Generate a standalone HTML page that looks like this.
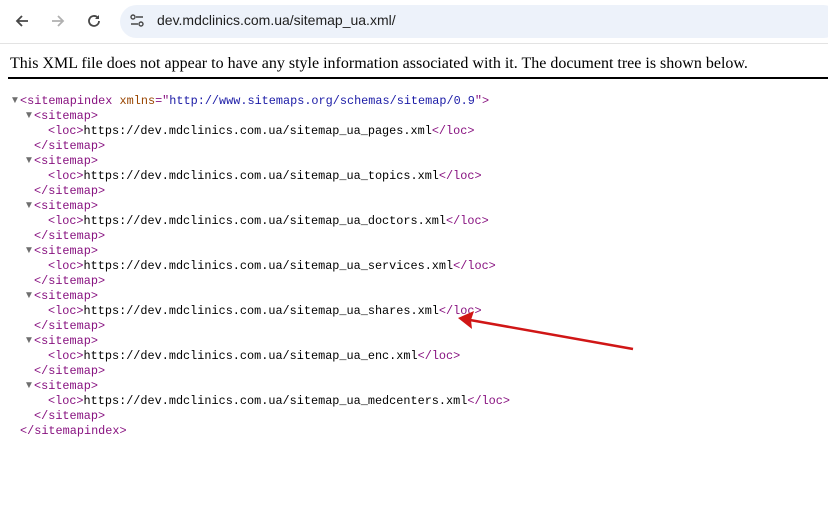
<!DOCTYPE html>
<html><head><meta charset="utf-8"><style>
body{margin:0;width:828px;height:513px;background:#fff;overflow:hidden;position:relative;font-family:"Liberation Sans",sans-serif}
.bar{position:absolute;left:0;top:0;width:828px;height:43px;background:#fff;border-bottom:1px solid #e3e3e3}
.pill{position:absolute;left:120px;top:5px;width:720px;height:33px;border-radius:17px;background:#edf2fa}
.url{position:absolute;left:157px;top:12px;font-size:14px;color:#1f1f1f}
.msg{position:absolute;left:10px;top:55px;font-family:"Liberation Serif",serif;font-size:16px;color:#000;white-space:nowrap}
.rule{position:absolute;left:8px;top:77px;width:820px;height:2px;background:#000}
.x{position:absolute;font-family:"Liberation Mono",monospace;font-size:11.85px;white-space:pre;line-height:15px;color:#000}
.t{color:#881280}.a{color:#994500}.v{color:#1a1aa6}
.tri{position:absolute;font-size:10px;color:#6e6e6e}
</style></head><body>
<div class="bar">
<svg style="position:absolute;left:13px;top:12px" width="18" height="18" viewBox="0 0 18 18"><path d="M15 9H4M9 4L4 9l5 5" stroke="#474747" stroke-width="1.8" fill="none"/></svg>
<svg style="position:absolute;left:49px;top:12px" width="18" height="18" viewBox="0 0 18 18"><path d="M3 9h11M9 4l5 5-5 5" stroke="#b0b0b0" stroke-width="1.8" fill="none"/></svg>
<svg style="position:absolute;left:85px;top:12px" width="18" height="18" viewBox="0 0 18 18"><path d="M14 9a5 5 0 1 1-1.5-3.6" stroke="#474747" stroke-width="1.8" fill="none"/><path d="M14 3v4h-4z" fill="#474747"/></svg>
<div class="pill"></div>
<svg style="position:absolute;left:129px;top:13px" width="16" height="16" viewBox="0 0 16 16"><circle cx="4" cy="4" r="2" stroke="#474747" stroke-width="1.4" fill="none"/><path d="M7 4h7M2 11h7" stroke="#474747" stroke-width="1.4"/><circle cx="12" cy="11" r="2" stroke="#474747" stroke-width="1.4" fill="none"/></svg>
<div class="url">dev.mdclinics.com.ua/sitemap_ua.xml/</div>
</div>
<div class="msg">This XML file does not appear to have any style information associated with it. The document tree is shown below.</div>
<div class="rule"></div>
<div class="x" style="left:20px;top:94px"><span class="t">&lt;sitemapindex</span> <span class="a">xmlns</span><span class="t">="</span><span class="v">http://www.sitemaps.org/schemas/sitemap/0.9</span><span class="t">"&gt;</span></div>
<div class="tri" style="left:10px;top:95px">▼</div>
<div id="c"></div>
<div class="x" style="left:20px;top:424px"><span class="t">&lt;/sitemapindex&gt;</span></div>
<svg style="position:absolute;left:0;top:0" width="828" height="513"><path d="M633 349L470 320" stroke="#d01616" stroke-width="2.5"/><path d="M458 318l16-7-3 9 1 9z" fill="#d01616"/></svg>
<script>
var n=["pages","topics","doctors","services","shares","enc","medcenters"],h="";
n.forEach(function(s,i){var y=109+i*45;
h+='<div class="tri" style="left:24px;top:'+(y+1)+'px">▼</div><div class="x" style="left:34px;top:'+y+'px"><span class="t">&lt;sitemap&gt;</span></div>';
h+='<div class="x" style="left:48px;top:'+(y+15)+'px"><span class="t">&lt;loc&gt;</span>https://dev.mdclinics.com.ua/sitemap_ua_'+s+'.xml<span class="t">&lt;/loc&gt;</span></div>';
h+='<div class="x" style="left:34px;top:'+(y+30)+'px"><span class="t">&lt;/sitemap&gt;</span></div>';});
document.getElementById("c").innerHTML=h;
</script>
</body></html>
